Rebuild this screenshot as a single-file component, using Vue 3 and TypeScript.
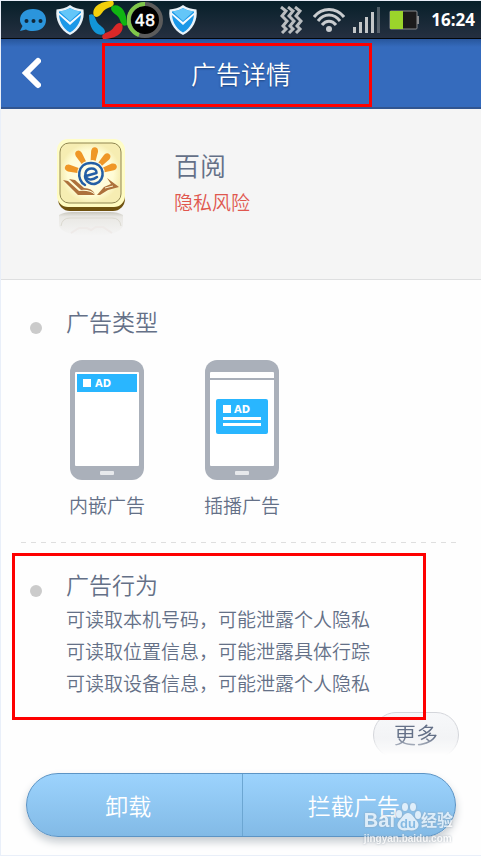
<script setup lang="ts">
interface AdType {
  id: string
  label: string
  popup: boolean
}

const adTypes: AdType[] = [
  { id: 'embedded', label: '内嵌广告', popup: false },
  { id: 'interstitial', label: '插播广告', popup: true },
]

const behaviours: string[] = [
  '可读取本机号码，可能泄露个人隐私',
  '可读取位置信息，可能泄露具体行踪',
  '可读取设备信息，可能泄露个人隐私',
]

const rays: number[] = [-75, -32, 9, 43, 72]
const petals = [
  { angle: 0, color: '#f2d00c' },
  { angle: 90, color: '#10b512' },
  { angle: 180, color: '#d92828' },
  { angle: 270, color: '#1295d6' },
]
</script>

<template>
  <div class="page">
    <div class="status">
      <div class="status-group">
        <svg class="chat" width="28" height="26" viewBox="0 0 28 26">
          <path d="M14 2C22 2 27 6.500 27 13S22 24 14 24C11 24 9 23.500 7 22.500L1 24L3.500 19C2 17 1 15 1 13C1 6.500 6 2 14 2Z" fill="#2b95dc" />
          <circle cx="7.500" cy="14" r="2" fill="#10283a" /><circle cx="14.500" cy="14" r="2" fill="#10283a" /><circle cx="21.500" cy="14" r="2" fill="#10283a" />
        </svg>
        <svg class="shield" width="30" height="32" viewBox="0 0 30 32">
          <path d="M15 1C19 4 24 5 28.500 5.500C30 16 25 26 15 31C5 26 0 16 1.500 5.500C6 5 11 4 15 1Z" fill="#e9f2f8" />
          <path d="M15 4C19 6.500 22 7 26 7.500C26.500 16 23 24 15 28.500C7 24 3.500 16 4 7.500C8 7 11 6.500 15 4Z" fill="#1b98e8" />
          <path d="M15 4C19 6.500 22 7 25.500 7.500L15 17L4.500 7.500C8 7 11 6.500 15 4Z" fill="#64c6f8" />
          <path d="M3 8L15 18L27 8L26 11L15 21L4 11Z" fill="#f4faff" />
        </svg>
        <svg class="pinwheel" width="38" height="38" viewBox="0 0 38 38">
          <path v-for="p in petals" :key="p.angle" d="M5 15C2 7 10 0 24 0C27 5 21 6 17 8C13 10 12 16 7 16Z" :fill="p.color" :transform="`rotate(${p.angle} 19 19)`" />
        </svg>
        <svg class="meter" width="36" height="36" viewBox="0 0 36 36">
          <circle cx="18" cy="18" r="16" fill="#000" stroke="#5b5b5b" stroke-width="4" />
          <path d="M18 2A16 16 0 0 0 12 33" fill="none" stroke="#7fc74a" stroke-width="4" />
          <text x="18" y="24" text-anchor="middle" class="meter-text">48</text>
        </svg>
        <svg class="shield last" width="30" height="32" viewBox="0 0 30 32">
          <path d="M15 1C19 4 24 5 28.500 5.500C30 16 25 26 15 31C5 26 0 16 1.500 5.500C6 5 11 4 15 1Z" fill="#e9f2f8" />
          <path d="M15 4C19 6.500 22 7 26 7.500C26.500 16 23 24 15 28.500C7 24 3.500 16 4 7.500C8 7 11 6.500 15 4Z" fill="#1b98e8" />
          <path d="M15 4C19 6.500 22 7 25.500 7.500L15 17L4.500 7.500C8 7 11 6.500 15 4Z" fill="#64c6f8" />
          <path d="M3 8L15 18L27 8L26 11L15 21L4 11Z" fill="#f4faff" />
        </svg>
      </div>
      <div class="status-group right">
        <svg class="vibrate" width="24" height="28" viewBox="0 0 24 28">
          <g fill="none" stroke="#b9bdc0" stroke-width="3">
            <path d="M2 1L7 5L3 10L8 15L4 20L7 23L3 27" /><path d="M9 1L14 5L10 10L15 15L11 20L14 23L10 27" /><path d="M16 1L21 5L17 10L22 15L18 20L21 23L17 27" />
          </g>
        </svg>
        <svg class="wifi" width="32" height="24" viewBox="0 0 32 24">
          <g fill="none" stroke="#c9cccf" stroke-width="3">
            <path d="M1 9C9-1 23-1 31 9" /><path d="M5 13C11 5 21 5 27 13" /><path d="M9 17C13 12 19 12 23 17" />
          </g>
          <circle cx="16" cy="21" r="3" fill="#c9cccf" />
        </svg>
        <svg class="signal" width="28" height="28" viewBox="0 0 28 28">
          <g fill="#c3c6c8"><path d="M0 21h3v6H0zM6 16h3v11H6zM12 11h3v16h-3zM18 6h3v21h-3z" /><path d="M24 1h3v26h-3z" opacity=".35" /></g>
        </svg>
        <svg class="battery" width="30" height="20" viewBox="0 0 30 20">
          <rect x="1" y="1" width="27" height="18" rx="1" fill="#1b1b1b" stroke="#898b8d" />
          <rect x="1" y="1" width="13" height="18" fill="#9bd52b" />
          <path d="M28 6h2v8h-2z" fill="#898b8d" />
        </svg>
        <span class="clock">16:24</span>
      </div>
    </div>

    <header class="header">
      <button class="back" type="button" aria-label="返回">
        <svg width="20" height="32" viewBox="0 0 20 32"><path d="M17 4L5 16L17 28" fill="none" stroke="#fff" stroke-width="6" stroke-linecap="round" stroke-linejoin="miter" /></svg>
      </button>
      <h1 class="title">广告详情</h1>
      <span class="mark mark-title"></span>
    </header>

    <section class="profile">
      <svg class="app-icon" width="70" height="102" viewBox="0 0 70 102">
        <defs>
          <linearGradient id="face" x1="0" y1="0" x2="0" y2="1"><stop offset="0" stop-color="#fffdc8" /><stop offset="1" stop-color="#fffbc0" /></linearGradient>
          <radialGradient id="panel"><stop offset="0" stop-color="#fffef0" /><stop offset=".75" stop-color="#fffcd5" /><stop offset="1" stop-color="#f6edb2" /></radialGradient>
          <linearGradient id="mirror" x1="0" y1="0" x2="0" y2="1"><stop offset="0" stop-color="#c9c7bd" /><stop offset=".2" stop-color="#e9e8e4" /><stop offset="1" stop-color="#f5f5f5" /></linearGradient>
        </defs>
        <rect x="2" y="5" width="67" height="68" rx="12" fill="#705310" />
        <rect x="1" y="1" width="68" height="68" rx="11" fill="url(#face)" />
        <rect x="4" y="5" width="61" height="60" rx="9" fill="url(#panel)" stroke="#8f8550" />
        <path v-for="angle in rays" :key="angle" d="M32.500 22.500L31.500 13Q32 9 35 9Q38 9 38.500 13L37.500 22.500Q35 21.500 32.500 22.500Z" fill="#ef9727" :transform="`rotate(${angle} 35 36)`" />
        <path d="M29 47C20 42 21 25 35 25C49 25 50 42 40 45.500C36 47 29 44 29 38" fill="none" stroke="#235fa5" stroke-width="2.500" stroke-linecap="round" />
        <path d="M30 38L40.500 35C41 29 31 29 29.500 35C28 42 36 43 41 39" fill="none" stroke="#235fa5" stroke-width="2.500" stroke-linecap="round" stroke-linejoin="round" />
        <g fill="#ad713c">
          <path d="M7 42L12 43L23 53Q34 52 39 57L22 57Z" /><path d="M13 41L19 42L28 50Q36 50 39 56Q34 51 25 52Z" />
          <path d="M41 57L48 49L55 46L51 40L63 49L52 52L44 57Z" />
        </g>
        <path d="M49 50L57 48" fill="none" stroke="#fff6d0" />
        <path d="M3 77Q8 74 16 74H54Q62 74 67 77V88Q63 98 35 98Q7 98 3 88Z" fill="url(#mirror)" />
        <path d="M5 88Q6 80 14 80H56Q64 80 65 88" fill="none" stroke="#dbd9d0" />
        <path d="M15 95L23 90H31L35 92L40 89H47L56 95" fill="none" stroke="#eeeae8" stroke-width="2" />
      </svg>
      <div class="profile-text">
        <h2 class="app-name">百阅</h2>
        <p class="risk">隐私风险</p>
      </div>
    </section>

    <main class="content">
      <section class="block">
        <i class="dot"></i>
        <div class="block-body">
          <h3 class="heading">广告类型</h3>
          <div class="types">
            <figure v-for="type in adTypes" :key="type.id" class="type">
              <svg width="74" height="120" viewBox="0 0 74 120">
                <rect width="74" height="120" rx="12" fill="#aab0ba" />
                <rect x="5" y="12" width="64" height="94" rx="1" fill="#fff" />
                <rect x="30" y="111" width="14" height="4" rx="1" fill="#e7e9ec" />
                <template v-if="type.popup">
                  <path d="M5 18h64v2H5z" fill="#aab0ba" />
                  <rect x="11" y="39" width="52" height="35" rx="2" fill="#29b6ff" />
                  <path d="M18 45h8v8h-8zM18 57h38v3H18zM18 63h38v3H18z" fill="#fff" />
                  <text x="29" y="53" class="ad-text">AD</text>
                </template>
                <template v-else>
                  <path d="M7 14h60v18H7z" fill="#29b6ff" />
                  <path d="M13 19h8v8h-8z" fill="#fff" />
                  <text x="25" y="27" class="ad-text">AD</text>
                </template>
              </svg>
              <figcaption class="type-label">{{ type.label }}</figcaption>
            </figure>
          </div>
        </div>
      </section>

      <div class="divider"></div>

      <section class="block behaviour">
        <i class="dot"></i>
        <div class="block-body">
          <h3 class="heading">广告行为</h3>
          <ul class="list">
            <li v-for="item in behaviours" :key="item">{{ item }}</li>
          </ul>
        </div>
        <span class="mark mark-behaviour"></span>
      </section>

      <div class="more-row"><button class="more" type="button">更多</button></div>

      <div class="actions">
        <button class="action" type="button">卸载</button>
        <button class="action" type="button">拦截广告</button>
      </div>
    </main>

    <div class="watermark">
      <div class="brand">
        <span>Bai</span>
        <svg width="26" height="30" viewBox="0 0 26 30">
          <g fill="#fff"><ellipse cx="4" cy="12" rx="3" ry="4" /><ellipse cx="10" cy="5" rx="3" ry="4" /><ellipse cx="18" cy="5" rx="3" ry="4" /><ellipse cx="23" cy="13" rx="3" ry="4" /><path d="M13 11C17 11 18 15 22 19C26 24 22 30 13 28C4 30 0 24 4 19C8 15 9 11 13 11Z" /></g>
          <text x="13" y="26" text-anchor="middle" class="du">du</text>
        </svg>
        <span class="brand-cn">经验</span>
      </div>
      <div class="site">jingyan.baidu.com</div>
    </div>
  </div>
</template>

<style>
body {
  margin: 0;
}
</style>

<style scoped>
.page {
  position: relative;
  box-sizing: border-box;
  min-height: 100vh;
  border: 1px solid #e9eff9;
  border-right: 0;
  background: #fefefe;
  color: #647087;
  font-family: "Noto Sans", "Noto Sans CJK SC", sans-serif;
  font-weight: 350;
}
h1, h2, h3, p, ul, figure {
  margin: 0;
  padding: 0;
  font-weight: inherit;
}
button {
  margin: 0;
  padding: 0;
  border: 0;
  background: none;
  font: inherit;
  color: inherit;
}
svg {
  display: block;
  flex: none;
}
.status {
  display: flex;
  justify-content: space-between;
  box-sizing: border-box;
  height: 38px;
  padding: 0 6px 0 18px;
  border-bottom: 1px solid #03060a;
  background: linear-gradient(#07202a, #252f40);
}
.status-group {
  display: flex;
  align-items: center;
}
.shield {
  margin: 0 4px 0 8px;
}
.shield.last {
  margin-left: 5px;
}
.meter-text {
  fill: #fff;
  font: 400 16px "DejaVu Sans", sans-serif;
  stroke: #fff;
  stroke-width: 0.5px;
}
.right {
  gap: 8px;
}
.vibrate {
  margin-right: 2px;
}
.clock {
  margin-left: 4px;
  color: #fff;
  font: 700 17px/38px "Noto Sans", sans-serif;
}
.header {
  position: relative;
  display: grid;
  grid-template-columns: 60px 1fr 60px;
  align-items: center;
  box-sizing: border-box;
  height: 70px;
  border-bottom: 2px solid #315590;
  background: linear-gradient(#28569c, #356bbd 8px);
}
.back {
  display: flex;
  padding: 0 20px;
}
.title {
  padding-top: 2px;
  color: #fff;
  font-size: 25px;
  line-height: 36px;
  text-align: center;
  text-shadow: 0 1px 2px #1d427b;
}
.mark {
  position: absolute;
  box-sizing: border-box;
  border: 3px solid #fe0000;
  pointer-events: none;
}
.mark-title {
  inset: 4px 109px 0 101px;
}
.profile {
  display: flex;
  gap: 48px;
  box-sizing: border-box;
  height: 171px;
  padding: 29px 24px 0 55px;
  border-bottom: 1px solid #dedfe0;
  background: #f5f5f5;
}
.profile-text {
  padding-top: 9px;
}
.app-name {
  font-size: 26px;
  line-height: 38px;
}
.risk {
  margin-top: 2px;
  color: #e0574e;
  font-size: 19px;
  line-height: 32px;
}
.block {
  position: relative;
  display: flex;
  gap: 24px;
  padding: 26px 24px 0 29px;
}
.dot {
  flex: none;
  width: 12px;
  height: 12px;
  margin-top: 16px;
  border-radius: 50%;
  background: #cbcbcb;
}
.block-body {
  flex: 1;
}
.heading {
  font-size: 23px;
  line-height: 32px;
}
.types {
  display: flex;
  gap: 59px;
  padding: 22px 0 0 3px;
}
.type {
  display: flex;
  flex-direction: column;
  align-items: center;
  gap: 12px;
  width: 76px;
}
.ad-text {
  fill: #fff;
  font: 700 10px "DejaVu Sans", sans-serif;
}
.type-label {
  font-size: 19px;
  line-height: 28px;
}
.divider {
  height: 1px;
  margin: 22px 24px 0 20px;
  background: repeating-linear-gradient(90deg, #dfdfdf 0 5px, transparent 5px 10px);
}
.behaviour {
  padding-top: 26px;
}
.list {
  margin-top: 3px;
  list-style: none;
  font-size: 19px;
  line-height: 32px;
}
.mark-behaviour {
  z-index: 1;
  inset: 10px 55px -20px 11px;
}
.more-row {
  display: flex;
  justify-content: flex-end;
  height: 43px;
  margin-top: 12px;
  padding-right: 22px;
  overflow: hidden;
  mask-image: linear-gradient(#000 60%, transparent);
}
.more {
  box-sizing: border-box;
  width: 86px;
  height: 46px;
  padding-bottom: 2px;
  border: 1px solid #d4d6db;
  border-radius: 23px;
  background: linear-gradient(#f7f8fa, #eff0f2);
  font-size: 22px;
  line-height: 40px;
}
.actions {
  display: flex;
  box-sizing: border-box;
  height: 64px;
  margin: 18px 25px;
  border: 1px solid #5c94c5;
  border-radius: 32px;
  overflow: hidden;
  background: linear-gradient(#9cd3fd, #82bae6);
  box-shadow: 0 5px 8px #c5cbd0;
}
.action {
  flex: 1;
  padding-right: 12px;
  color: #fff;
  font-size: 23px;
}
.action + .action {
  padding: 0 0 0 10px;
  border-left: 1px solid #6ca6d2;
}
.watermark {
  position: absolute;
  right: 28px;
  bottom: 9px;
  color: #fff;
  opacity: 0.72;
  filter: drop-shadow(0 0 1px #8d9ba8);
}
.brand {
  display: flex;
  align-items: flex-end;
  font: 700 20px/24px "Liberation Sans", sans-serif;
}
.brand-cn {
  font: 700 16px/25px "Noto Sans CJK SC", sans-serif;
}
.du {
  fill: #85b9e0;
  font: 700 13px "Liberation Sans", sans-serif;
}
.site {
  font: 700 10px/14px "Liberation Sans", sans-serif;
}
</style>
